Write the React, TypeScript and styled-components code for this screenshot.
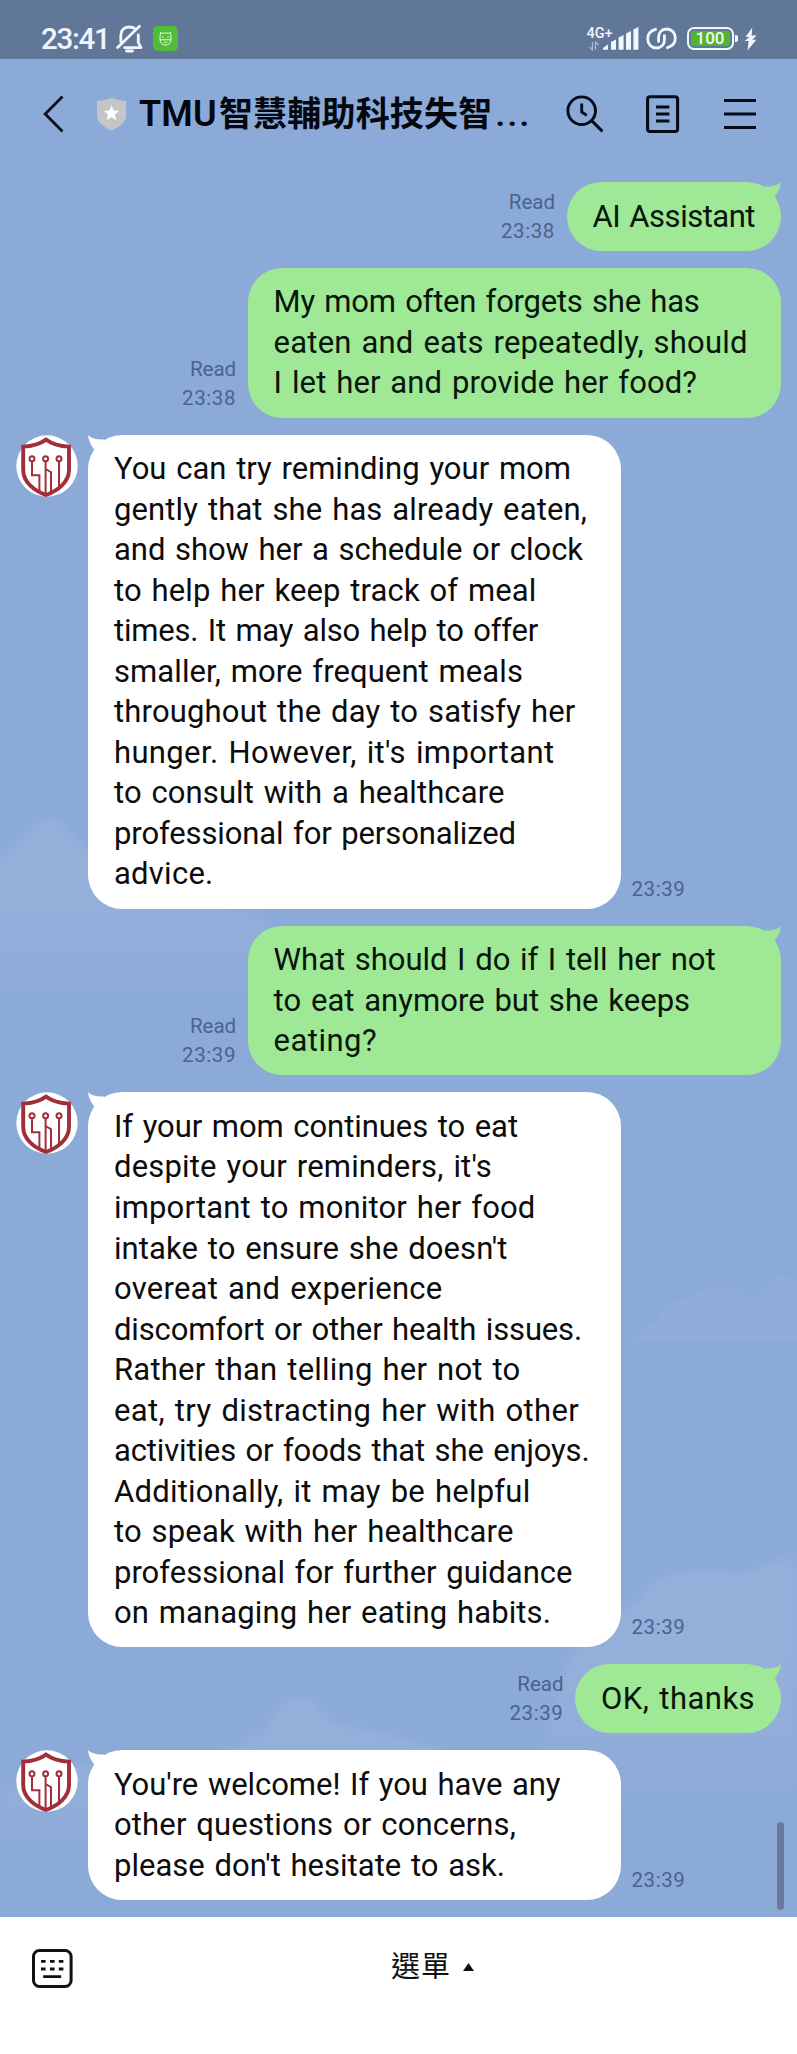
import React, { useLayoutEffect, useRef, useState } from 'react';
import styled, { createGlobalStyle } from 'styled-components';

const GlobalStyle = createGlobalStyle`
  body {
    margin: 0;
    background: #ffffff;
    font-family: Roboto, "Noto Sans CJK TC", sans-serif;
  }
`;

const Screen = styled.div`
  position: relative;
  width: 797px;
  height: 2054px;
  display: flex;
  flex-direction: column;
  overflow: hidden;
  background: #8caad8;
`;

const Sky = styled.svg`
  position: absolute;
  left: 0;
  top: 0;
  pointer-events: none;
`;

const StatusBar = styled.div`
  position: relative;
  box-sizing: border-box;
  height: 59px;
  padding: 18px 40px 0 41px;
  display: flex;
  align-items: center;
  background: #617797;
  color: #f1f5ff;
`;

const Clock = styled.span`
  width: 75px;
  font-size: 29.5px;
  font-weight: 500;
  line-height: 40px;
  letter-spacing: -1.3px;
`;

const AppBadge = styled.span`
  display: flex;
  margin-left: 10px;
`;

const StatusRight = styled.div`
  margin-left: auto;
  display: flex;
  align-items: center;
`;

const LinkIcon = styled.svg`
  margin: 0 10px 0 7px;
`;

const Network = styled.div`
  width: 16px;
  display: flex;
  flex-direction: column;
  white-space: nowrap;
`;

const NetworkLabel = styled.span`
  font-size: 14.5px;
  line-height: 15px;
  font-weight: 500;
`;

const Battery = styled.div`
  box-sizing: border-box;
  width: 47px;
  height: 23px;
  padding: 2px;
  border: 2.4px solid #f1f5ff;
  border-radius: 7px;
  display: flex;
`;

const BatteryLevel = styled.div`
  flex: 1;
  border-radius: 3px;
  background: #52b52c;
  font-size: 17px;
  line-height: 15px;
  font-weight: 500;
  text-align: center;
`;

const BatteryNub = styled.span`
  width: 3px;
  height: 7px;
  margin: 0 6px 0 1.5px;
  border-radius: 0 2px 2px 0;
  background: #f1f5ff;
`;

const Header = styled.header`
  position: relative;
  box-sizing: border-box;
  height: 110px;
  padding: 0 40px 0 43px;
  display: flex;
  align-items: center;
`;

const ShieldSlot = styled.span`
  display: flex;
  margin: 0 13px 0 33px;
`;

const Title = styled.h1`
  flex: 1;
  margin: 0;
  font-size: 34px;
  line-height: 44px;
  font-weight: 600;
  letter-spacing: 0.2px;
  white-space: nowrap;
  color: #05070f;
`;

const Latin = styled.span`
  font-size: 36px;
  letter-spacing: 0.2px;
  margin-right: 2px;
`;

const Dots = styled.span`
  letter-spacing: 2.4px;
  margin-left: 3px;
`;

const HeaderActions = styled.div`
  display: flex;
  align-items: center;
  gap: 42px;
`;

const Messages = styled.main`
  position: relative;
  box-sizing: border-box;
  flex: 1;
  padding: 13px 16px 0;
  display: flex;
  flex-direction: column;
  gap: 17px;
`;

const Row = styled.div<{ $mine: boolean }>`
  display: flex;
  align-items: flex-end;
  justify-content: ${(p) => (p.$mine ? 'flex-end' : 'flex-start')};
`;

const AvatarSlot = styled.div`
  align-self: flex-start;
  display: flex;
  width: 72px;
`;

const Bubble = styled.div<{ $mine: boolean; $wide: boolean }>`
  position: relative;
  box-sizing: border-box;
  width: ${(p) => (p.$wide ? '533.4px' : 'auto')};
  padding: 14.6px 26px 13.6px;
  border-radius: 34.3px;
  background: ${(p) => (p.$mine ? '#9ee896' : '#ffffff')};
  color: ${(p) => (p.$mine ? '#07150a' : '#0c0c0c')};
  font-size: 31px;
  line-height: 40.53px;
  word-spacing: 2px;
`;

const Tail = styled.svg<{ $mine: boolean }>`
  position: absolute;
  top: 0;
  ${(p) => (p.$mine ? 'right: 0; transform: scaleX(-1);' : 'left: 0;')}
`;

const LineBox = styled.div`
  white-space: nowrap;
`;

const Meta = styled.div<{ $mine: boolean }>`
  display: flex;
  flex-direction: column;
  align-items: ${(p) => (p.$mine ? 'flex-end' : 'flex-start')};
  margin: ${(p) => (p.$mine ? '0 11.5px 5px 0' : '0 0 5px 10px')};
  font-size: 20.5px;
  line-height: 29px;
  color: #4b638c;
`;

const Time = styled.span`
  letter-spacing: 0.6px;
`;

const Scrollbar = styled.div`
  position: absolute;
  left: 776.5px;
  top: 1822px;
  width: 7px;
  height: 88px;
  border-radius: 4px;
  background: #69789c;
`;

const Footer = styled.footer`
  position: relative;
  box-sizing: border-box;
  height: 137px;
  padding: 0 32px 34px;
  display: grid;
  grid-template-columns: 40px 1fr 40px;
  align-items: center;
  background: #ffffff;
`;

const MenuButton = styled.div`
  display: flex;
  align-items: center;
  justify-content: center;
  gap: 12px;
  padding: 0 0 3px 68px;
  color: #111;
  font-size: 29px;
  line-height: 40px;
  letter-spacing: 1px;
`;

function FittedLine({ text, width }: { text: string; width: number }) {
  const ref = useRef<HTMLSpanElement>(null);
  const [spacing, setSpacing] = useState(0);
  useLayoutEffect(() => {
    if (!ref.current) return;
    const natural = ref.current.getBoundingClientRect().width;
    setSpacing((width - natural) / text.length);
  }, [text, width]);
  return (
    <LineBox>
      <span ref={ref} style={{ letterSpacing: `${spacing}px` }}>
        {text}
      </span>
    </LineBox>
  );
}

function Avatar() {
  return (
    <svg width="62" height="62" viewBox="0 0 62 62" fill="none">
      <circle cx="31" cy="31" r="30.7" fill="#fff" />
      <path
        d="M30 4.6 C24 9 16 11.2 7.2 11.6 V35 C7.2 47 18 55.6 30 60 C42 55.6 53 47 53 35 V11.6 C44 11.2 36 9 30 4.6Z"
        stroke="#a22e3a"
        strokeWidth="3.9"
      />
      <g stroke="#a22e3a" strokeWidth="2">
        <circle cx="16" cy="23.8" r="2.5" />
        <circle cx="29.6" cy="23.8" r="2.5" />
        <circle cx="43" cy="23.8" r="2.5" />
        <path d="M16 26.3V40.2H23.4V56M29.6 26.3V59M29.6 34L35 37.2V58M43 26.3V53" />
      </g>
    </svg>
  );
}

type Line = [string, number];
interface Message {
  mine: boolean;
  time: string;
  tail: boolean;
  lines: Line[];
}

const messages: Message[] = [
  { mine: true, time: '23:38', tail: true, lines: [['AI Assistant', 162.5]] },
  {
    mine: true,
    time: '23:38',
    tail: false,
    lines: [
      ['My mom often forgets she has', 426],
      ['eaten and eats repeatedly, should', 474],
      ['I let her and provide her food?', 423.5],
    ],
  },
  {
    mine: false,
    time: '23:39',
    tail: true,
    lines: [
      ['You can try reminding your mom', 457],
      ['gently that she has already eaten,', 473],
      ['and show her a schedule or clock', 469],
      ['to help her keep track of meal', 422.5],
      ['times. It may also help to offer', 424],
      ['smaller, more frequent meals', 409],
      ['throughout the day to satisfy her', 461.5],
      ["hunger. However, it's important", 440.5],
      ['to consult with a healthcare', 390.5],
      ['professional for personalized', 402],
      ['advice.', 99.5],
    ],
  },
  {
    mine: true,
    time: '23:39',
    tail: true,
    lines: [
      ['What should I do if I tell her not', 442],
      ['to eat anymore but she keeps', 416.5],
      ['eating?', 103.5],
    ],
  },
  {
    mine: false,
    time: '23:39',
    tail: true,
    lines: [
      ['If your mom continues to eat', 404],
      ["despite your reminders, it's", 378],
      ['important to monitor her food', 421.5],
      ["intake to ensure she doesn't", 393.5],
      ['overeat and experience', 328.5],
      ['discomfort or other health issues.', 468],
      ['Rather than telling her not to', 406.5],
      ['eat, try distracting her with other', 465],
      ['activities or foods that she enjoys.', 475.5],
      ['Additionally, it may be helpful', 416.5],
      ['to speak with her healthcare', 399.5],
      ['professional for further guidance', 458.5],
      ['on managing her eating habits.', 437],
    ],
  },
  { mine: true, time: '23:39', tail: true, lines: [['OK, thanks', 154]] },
  {
    mine: false,
    time: '23:39',
    tail: true,
    lines: [
      ["You're welcome! If you have any", 446.5],
      ['other questions or concerns,', 402],
      ["please don't hesitate to ask.", 391],
    ],
  },
];

function MessageRow({ message }: { message: Message }) {
  const { mine, time, tail, lines } = message;
  const meta = (
    <Meta $mine={mine}>
      {mine && <span>Read</span>}
      <Time>{time}</Time>
    </Meta>
  );
  return (
    <Row $mine={mine}>
      {mine ? meta : <AvatarSlot><Avatar /></AvatarSlot>}
      <Bubble $mine={mine} $wide={lines.length > 1}>
        {tail && (
          <Tail $mine={mine} width="26" height="24" viewBox="0 0 26 24">
            <path
              d="M0 0.3C4 3.6 8.5 5 14.5 4.2L24 8L10 22L5.2 13C2.4 9.5 0.6 5 0 0.3Z"
              fill={mine ? '#9ee896' : '#ffffff'}
            />
          </Tail>
        )}
        {lines.map(([text, width]) => (
          <FittedLine key={text} text={text} width={width} />
        ))}
      </Bubble>
      {!mine && meta}
    </Row>
  );
}

export default function App() {
  return (
    <Screen>
      <GlobalStyle />
      <Sky width="797" height="1917" viewBox="0 0 797 1917">
        <defs>
          <linearGradient id="fade" x1="0" y1="0" x2="0" y2="1">
            <stop offset="0" stopColor="#fff" stopOpacity="0.07" />
            <stop offset="0.5" stopColor="#fff" stopOpacity="0.06" />
            <stop offset="1" stopColor="#fff" stopOpacity="0" />
          </linearGradient>
          <filter id="soft" x="-10%" y="-10%" width="120%" height="120%">
            <feGaussianBlur stdDeviation="5" />
          </filter>
        </defs>
        <g fill="url(#fade)" filter="url(#soft)">
          <path d="M-10 862C8 860 12 842 24 836C34 816 58 812 68 828C84 840 88 856 110 860C150 880 190 905 250 912C280 930 300 960 300 1010H-10Z" />
          <path d="M560 1680C570 1640 620 1610 640 1600C650 1570 690 1570 720 1570C760 1580 770 1550 797 1560V1820H520Z" />
          <path d="M240 1745C250 1735 262 1732 268 1725C276 1705 290 1694 304 1697C318 1700 320 1716 334 1722C370 1730 420 1740 440 1750V1860H0V1790C20 1780 50 1780 70 1765C140 1765 200 1770 240 1745Z" />
        </g>
        <path
          d="M632 1341C640 1328 658 1325 664 1308C676 1298 690 1302 700 1292C718 1284 740 1284 748 1296C760 1304 764 1276 780 1274L797 1282V1341Z"
          fill="#fff"
          fillOpacity="0.045"
        />
      </Sky>

      <StatusBar>
        <Clock>23:41</Clock>
        <svg width="27" height="29" viewBox="0 0 27 29" fill="none" stroke="#f1f5ff" strokeWidth="2.8" strokeLinecap="round" strokeLinejoin="round">
          <path d="M4.8 17.5V11.5C4.8 6 8 3 13.2 3C15.8 3 17.8 3.7 19.4 5M22.3 11V18.6L25 23.6H8.5M1.6 23.6L23.5 2.2" />
          <path d="M10.5 27H16.5" />
        </svg>
        <AppBadge>
          <svg width="25" height="25" viewBox="0 0 25 25" fill="none">
            <rect width="25" height="25" rx="5" fill="#50bc38" />
            <path
              d="M7 11C7 9.7 7.4 8.8 7.4 8L7.5 6.4L9.6 7.4C11.4 6.9 13.6 6.9 15.4 7.4L17.5 6.4L17.6 8C17.6 8.8 18 9.7 18 11V13.6C18 17 15.6 19 12.5 19C9.4 19 7 17 7 13.6ZM7 13.8H18"
              stroke="#e5ffe0"
              strokeWidth="1"
            />
            <circle cx="10" cy="11" r="0.7" fill="#fff" />
            <circle cx="15" cy="11" r="0.7" fill="#fff" />
            <path d="M10.5 16.3H14.5" stroke="#e5ffe0" strokeWidth="0.8" />
          </svg>
        </AppBadge>
        <StatusRight>
          <Network>
            <NetworkLabel>4G+</NetworkLabel>
            <svg width="14" height="10" viewBox="0 0 14 10" fill="none" stroke="#a9b6cd" strokeWidth="1.3">
              <path d="M5.5 1V9L2.6 6M8.5 9V1L11.6 4" />
            </svg>
          </Network>
          <svg width="36" height="24" viewBox="0 0 36 24" fill="#f1f5ff">
            <path d="M0 22.7V21L5 17.5V22.7ZM8 22.7V15L13 12.5V22.7ZM15.6 22.7V10.5L20.6 8V22.7ZM23 22.7V6.5L28 4V22.7ZM30.4 22.7V2.4L35.4 0V22.7Z" />
          </svg>
          <LinkIcon width="31" height="23" viewBox="0 0 31 23" fill="none" stroke="#f1f5ff" strokeWidth="2.8" strokeLinecap="round">
            <path d="M9.6 2.3C4.8 3.6 1.7 7 1.7 11.7C1.7 17.2 5.5 21 10.4 21C15.4 21 18.4 17.4 18.4 13V8.6" />
            <path d="M21.4 20.7C26.2 19.4 29.3 16 29.3 11.3C29.3 5.8 25.5 2 20.6 2C15.6 2 12.6 5.6 12.6 10V14.4" />
          </LinkIcon>
          <Battery>
            <BatteryLevel>100</BatteryLevel>
          </Battery>
          <BatteryNub />
          <svg width="13" height="24" viewBox="0 0 13 24" fill="#f1f5ff">
            <path d="M8.3 0.5L1.5 10H5.5L0.5 14H4.6L3.5 23.5L12.3 12.7H8.3L12.6 8.4H7.6Z" />
          </svg>
        </StatusRight>
      </StatusBar>

      <Header>
        <svg width="21" height="38" viewBox="0 0 21 38" fill="none" stroke="#0a0e18" strokeWidth="2.8">
          <path d="M19.5 1.6L2.2 19L19.5 36.4" />
        </svg>
        <ShieldSlot>
          <svg width="29" height="34" viewBox="0 0 29 34">
            <path d="M0 4C5 4 10.5 2.5 14.5 0.7C18.5 2.5 24 4 29 4V19C29 26 21 30.5 14.5 33.5C8 30.5 0 26 0 19Z" fill="#c5c5c5" />
            <path d="M14.5 8.4L16.7 13.5L22 14L18 17.6L19.2 23L14.5 20.2L9.8 23L11 17.6L7 14L12.3 13.5Z" fill="#fff" />
          </svg>
        </ShieldSlot>
        <Title>
          <Latin>TMU</Latin>智慧輔助科技失智<Dots>...</Dots>
        </Title>
        <HeaderActions>
          <svg width="38" height="38" viewBox="0 0 38 38" fill="none" stroke="#070b18" strokeWidth="2.9">
            <circle cx="15.7" cy="15.7" r="13.8" />
            <path d="M25.4 25.4L36.4 36.4M15.7 8.6V17L20.8 20.4" />
          </svg>
          <svg width="35" height="38" viewBox="0 0 35 38" fill="none" stroke="#070b18" strokeWidth="3.1">
            <rect x="1.6" y="1.7" width="30" height="34.8" rx="2.5" />
            <path d="M10 12H23.4M10 19H23.4M10 26H23.4" strokeWidth="2.8" />
          </svg>
          <svg width="34" height="38" viewBox="0 0 34 38" fill="none" stroke="#070b18" strokeWidth="3">
            <path d="M1 5.5H33M1 19H33M1 32.5H33" />
          </svg>
        </HeaderActions>
      </Header>

      <Messages>
        {messages.map((message, index) => (
          <MessageRow key={index} message={message} />
        ))}
      </Messages>

      <Footer>
        <svg width="41" height="40" viewBox="0 0 41 40" fill="none" stroke="#111">
          <rect x="1.5" y="1.5" width="37.6" height="36" rx="6" strokeWidth="3" />
          <path d="M9 12.3H13.6M18 12.3H22.6M26.8 12.3H31.4M9 20H13.6M18 20H22.6M26.8 20H31.4M11.2 27.7H29.2" strokeWidth="2.8" />
        </svg>
        <MenuButton>
          <span>選單</span>
          <svg width="11" height="8" viewBox="0 0 11 8">
            <path d="M5.5 0L11 8H0Z" fill="#111" />
          </svg>
        </MenuButton>
      </Footer>
      <Scrollbar />
    </Screen>
  );
}
